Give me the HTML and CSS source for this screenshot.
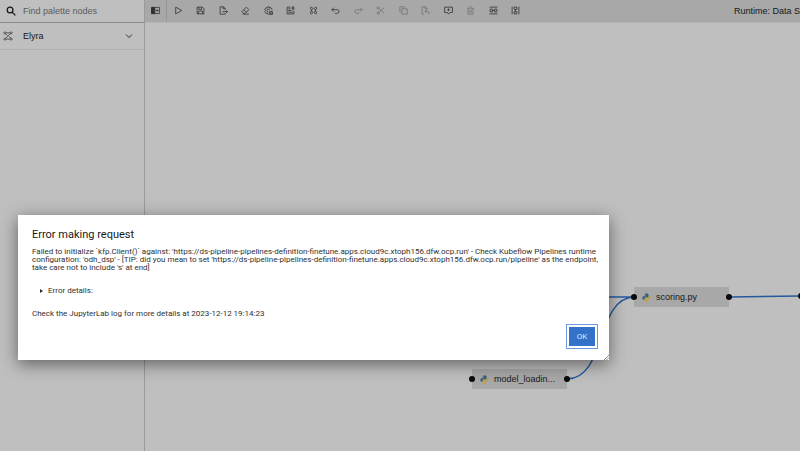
FILE: index.html
```html
<!DOCTYPE html>
<html lang="en">
<head>
<meta charset="utf-8">
<title>Pipeline editor</title>
<link rel="stylesheet" href="styles.css">
</head>
<body>
<svg class="defs" aria-hidden="true">
  <symbol id="python" viewBox="0 0 20 20">
    <path fill="#315b7d" d="M10 1C6 1 6 2.500 6 4v2h4.500v1H4C2 7 1 8.500 1 11s1 4 3 4h1.500v-2.500C5.500 11 7 10 8 10h4c1.500 0 2.500-1 2.500-2.500V4C14.500 2 13 1 10 1z"/>
    <path fill="#c0a13e" d="M10 19.500c4 0 4-1.500 4-3v-2H9.500v-1H16c2 0 3-1.500 3-4s-1-4-3-4h-.8v2.500c0 1.500-1.200 2.800-2.700 2.800h-4C7 10.800 6 12 6 13.300v3.200c0 2 1.500 3 4 3z"/>
    <circle cx="8" cy="3.500" r=".9" fill="#bbb"/><circle cx="12" cy="17" r=".9" fill="#bbb"/>
  </symbol>
</svg>
<div class="app">
  <aside class="palette">
    <label class="search">
      <svg viewBox="0 0 16 16" class="search-icon"><circle cx="6.500" cy="6.500" r="4.600"/><path d="M10 10l5 5"/></svg>
      <input type="text" placeholder="Find palette nodes" aria-label="Find palette nodes">
    </label>
    <button class="category">
      <svg viewBox="0 0 16 16" class="elyra-icon"><circle cx="3" cy="3" r="1.600"/><circle cx="13" cy="3" r="1.600"/><circle cx="3" cy="13" r="1.600"/><circle cx="13" cy="13" r="1.600"/><path d="M5 3h6M5 13h6M11.800 4.200l-7.600 7.600M4 5l3 2M9.500 9l3 2"/></svg>
      <span>Elyra</span>
      <svg viewBox="0 0 16 16" class="chevron"><path d="M2 5l6 6 6-6"/></svg>
    </button>
  </aside>
  <main class="editor">
    <header class="toolbar">
      <button class="tool toggle" aria-label="Toggle palette"><svg viewBox="0 0 16 16"><path d="M1 2.500h14v11H1zM7 2.500v11M9 8h4.500M11.200 5.800v4.400"/><path class="solid" d="M1 2.500h5v11H1z"/></svg></button>
      <div class="tools">
        <button class="tool" aria-label="Run"><svg viewBox="0 0 16 16"><path d="M3 2l11 6-11 6z"/></svg></button>
        <button class="tool" aria-label="Save"><svg viewBox="0 0 16 16"><path d="M2 2h9.500L14 4.500V14H2zM5 2v4h5V2M4.500 14V9h7v5"/></svg></button>
        <button class="tool" aria-label="Export"><svg viewBox="0 0 16 16"><path d="M11 6V4.500L8 1.500H2v13h9V13M7.500 1.500V5H11M6 10h9M12.500 7.500L15 10l-2.500 2.500"/></svg></button>
        <button class="tool" aria-label="Clear"><svg viewBox="0 0 16 16"><path d="M9.500 2L14 6.500 7.500 13H4.500L1.500 10zM5 6.500l4.500 4.500M3 14.500h11"/></svg></button>
        <button class="tool" aria-label="Runtimes"><svg viewBox="0 0 16 16"><path d="M8 14.500H6.500L6 12.500l-2.500.5L1.500 10 3 8 1.500 6l2-3L6 3.500l.5-2h3l.5 2 2.500-.5 2 3-1 1.500M8 10.500a2.500 2.500 0 1 1 2.500-3M10 10h5M10 12.500h5M10 15h5M10 10v5M15 10v5"/></svg></button>
        <button class="tool" aria-label="Images"><svg viewBox="0 0 16 16"><path d="M8 2H2v12h12V8M4 5h4M4 8h6M4 11h8M10 2h5M10 5h5M12.500 1v6"/></svg></button>
        <button class="tool" aria-label="Components"><svg viewBox="0 0 16 16"><circle cx="4.500" cy="4.500" r="2"/><circle cx="11.500" cy="4.500" r="2"/><circle cx="4.500" cy="11.500" r="2"/><circle cx="11.500" cy="11.500" r="2"/><path d="M2 2h1M13 2h1M2 14h1M13 14h1M4.500 6.500v3M11.500 6.500v3"/></svg></button>
        <button class="tool" aria-label="Undo"><svg viewBox="0 0 16 16"><path d="M5 3L1.500 6.500 5 10M1.500 6.500H11a3.200 3.200 0 0 1 0 6.500H7"/></svg></button>
        <button class="tool dim" aria-label="Redo"><svg viewBox="0 0 16 16"><path d="M11 3l3.500 3.500L11 10M14.500 6.500H5A3.200 3.200 0 0 0 5 13h4"/></svg></button>
        <button class="tool dim" aria-label="Cut"><svg viewBox="0 0 16 16"><circle cx="4" cy="3.500" r="2"/><circle cx="4" cy="12.500" r="2"/><path d="M5.500 4.800L14.500 13M5.500 11.200L14.500 3"/></svg></button>
        <button class="tool dim" aria-label="Copy"><svg viewBox="0 0 16 16"><path d="M5 5h9.500v9.500H5zM2.500 10.500h-1v-9h9v1.500"/></svg></button>
        <button class="tool dim" aria-label="Paste"><svg viewBox="0 0 16 16"><path d="M5.500 14.500H2v-13h6L11 4.500V6M7.500 1.500V5H11M10 7L7 9.500l3 2.500M7 9.500h4c3 0 3.500 2 3.500 5"/></svg></button>
        <button class="tool" aria-label="Comment"><svg viewBox="0 0 16 16"><path d="M1 2h14v9.500h-4.500L8 14.500 6 11.500H1zM8 4.500v4.500M5.700 6.700h4.600"/></svg></button>
        <button class="tool dim" aria-label="Delete"><svg viewBox="0 0 16 16"><path d="M2 4h12M3.500 4v10.500h9V4M6 1.500h4M6.500 7v5M9.500 7v5"/></svg></button>
        <button class="tool" aria-label="Arrange horizontally"><svg viewBox="0 0 16 16"><path d="M1 2h14M1 14h14M2 5.500h4v5H2zM10 5.500h4v5h-4zM6 8h4"/></svg></button>
        <button class="tool" aria-label="Arrange vertically"><svg viewBox="0 0 16 16"><path d="M2 1v14M14 1v14M5.500 2h5v4h-5zM5.500 10h5v4h-5zM8 6v4"/></svg></button>
      </div>
      <span class="runtime">Runtime: Data S</span>
    </header>
    <section class="canvas">
      <svg class="links"><path d="M440 274H490M422 356C462 356 450 274 490 274M584 274L657 273"/></svg>
      <div class="node loading"><i class="port"></i><svg class="py"><use href="#python"/></svg><span>model_loadin...</span><i class="port"></i></div>
      <div class="node scoring"><i class="port"></i><svg class="py"><use href="#python"/></svg><span>scoring.py</span><i class="port"></i></div>
      <div class="node next"><i class="port"></i></div>
    </section>
  </main>
</div>
<div class="dialog" role="dialog" aria-labelledby="title">
  <h1 id="title">Error making request</h1>
  <p>Failed to initialize `kfp.Client()` against: 'https://ds-pipeline-pipelines-definition-finetune.apps.cloud9c.xtoph156.dfw.ocp.run' - Check Kubeflow Pipelines runtime<br>configuration: 'odh_dsp' - [TIP: did you mean to set 'https://ds-pipeline-pipelines-definition-finetune.apps.cloud9c.xtoph156.dfw.ocp.run/pipeline' as the endpoint,<br>take care not to include 's' at end]</p>
  <details><summary>Error details:</summary></details>
  <p>Check the JupyterLab log for more details at 2023-12-12 19:14:23</p>
  <footer><button class="ok">OK</button></footer>
  <svg class="grip" viewBox="0 0 6 6"><path d="M0 6L6 0M3 6L6 3"/></svg>
</div>
</body>
</html>
```
FILE: styles.css
```css
* { box-sizing: border-box; }
body { margin: 0; font-family: "Liberation Sans", sans-serif; background: #bfbfbf; color: #171717; overflow: hidden; }
button { margin: 0; padding: 0; border: 0; background: none; font: inherit; color: inherit; }
svg { display: block; fill: none; stroke: #303030; }
.defs { position: absolute; width: 0; height: 0; }
.app { display: grid; grid-template-columns: 145px 1fr; height: 100vh; }
.palette { border-right: 1px solid #9a9a9a; }
.search { display: flex; align-items: center; height: 23px; padding-left: 6px; gap: 7px; border-bottom: 1px solid #8c8c8c; }
.search-icon { width: 10px; height: 10px; stroke: #171717; stroke-width: 2; }
.search input { flex: 1; min-width: 0; padding: 0; border: 0; background: none; font: 9px "Liberation Sans", sans-serif; outline: 0; }
.search input::placeholder { color: #5c5c5c; opacity: 1; }
.category { display: flex; align-items: center; width: 100%; height: 27px; padding: 0 11px 0 3px; gap: 10px; border-bottom: 1px solid #b0b0b0; font-size: 9px; }
.category span { flex: 1; text-align: left; }
.elyra-icon { width: 10px; height: 10px; stroke: #404040; stroke-width: 1.3; }
.chevron { width: 8px; height: 8px; stroke-width: 2; }
.editor { display: flex; flex-direction: column; min-width: 0; }
.toolbar { display: flex; align-items: center; height: 23px; padding-bottom: 1px; background: #a8a8a8; border-bottom: 1px solid #b3b3b3; }
.tool { display: grid; place-items: center; height: 21px; }
.tool svg { width: 9px; height: 9px; stroke-width: 1.4; }
.toggle { width: 22px; border-right: 1px solid #959595; }
.toggle .solid { fill: #303030; }
.tools { display: grid; grid-template-columns: repeat(16, 1fr); width: 360px; flex: none; }
.dim svg { stroke: #707070; }
.runtime { margin-left: auto; white-space: nowrap; font-size: 9px; }
.canvas { position: relative; flex: 1; overflow: hidden; }
.links { position: absolute; inset: 0; width: 100%; height: 100%; stroke: #26589f; stroke-width: 1.4; }
.node { position: absolute; display: flex; align-items: center; width: 95px; height: 20px; background: #a8a8a8; font-size: 9px; white-space: nowrap; }
.scoring { left: 489px; top: 264px; }
.loading { left: 327px; top: 346px; }
.next { left: 656px; top: 263px; }
.port { flex: none; width: 6px; height: 6px; margin: 0 -3px; border-radius: 50%; background: #090909; }
.node span { flex: 1; }
.py { width: 9px; height: 9px; margin: 0 5px 0 8px; stroke: none; }
.dialog { position: absolute; left: 18px; top: 215px; right: 191px; padding: 13px 11px 11px 14px; background: #fff; box-shadow: 0 4px 16px rgba(0,0,0,.5); font-family: Roboto, sans-serif; color: #303030; }
.dialog h1 { margin: 0 0 7px; font-size: 11px; line-height: 13px; font-weight: 400; color: #171717; }
.dialog p { margin: 0; font-size: 8px; line-height: 8px; white-space: nowrap; }
details { margin: 14px 0 15px 8px; font-size: 8px; line-height: 9px; }
summary { display: flex; align-items: center; gap: 5px; }
summary::before { content: ""; border: solid transparent; border-width: 2px 0 2px 3px; border-left-color: #303030; }
footer { display: flex; justify-content: flex-end; margin-top: 6px; }
.ok { width: 32px; height: 25px; border: 1px solid #6b9ae0; padding: 2px; background: #3472c9 content-box; color: #dce8fa; font-size: 8px; }
.grip { position: absolute; right: 0; bottom: 0; width: 5px; height: 5px; stroke: #777; stroke-width: 1; }
```
